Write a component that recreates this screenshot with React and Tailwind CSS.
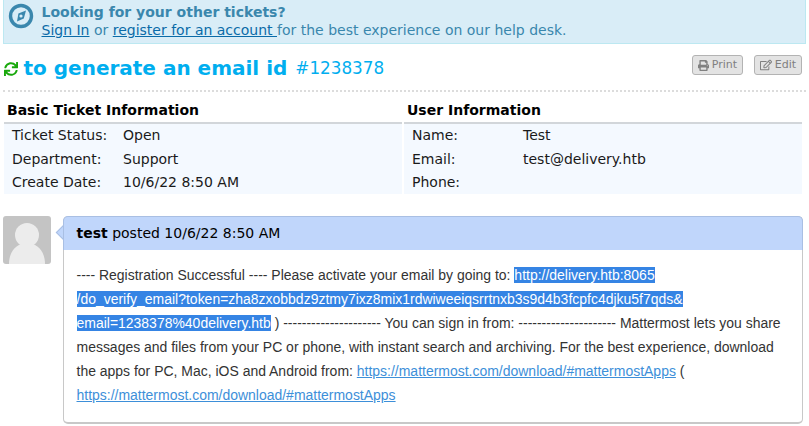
import { FaPrint, FaRegEdit, FaSync } from 'react-icons/fa'

const ticketRows = [
  ['Ticket Status:', 'Open'],
  ['Department:', 'Support'],
  ['Create Date:', '10/6/22 8:50 AM']
]

const userRows = [
  ['Name:', 'Test'],
  ['Email:', 'test@delivery.htb'],
  ['Phone:', '']
]

function InfoTable({ title, rows }) {
  return (
    <div className="w-[398px]">
      <h3 className="h-[30px] pl-[3px] pt-[10px] text-[14px] leading-[17px] font-bold text-black">{title}</h3>
      <div className="h-[72px] border-t-[2px] border-[#d2d6da] bg-[#f4f9ff]">
        {rows.map(([label, value]) => (
          <div key={label} className="flex h-[23.5px] items-center pl-[8px] text-[14px] text-[#1a1a1a]">
            <span className="w-[111px]">{label}</span>
            <span>{value}</span>
          </div>
        ))}
      </div>
    </div>
  )
}

function SupportIcon() {
  return (
    <svg viewBox="0 0 26 26" className="mt-[3px] w-[26px] h-[26px] shrink-0">
      <circle cx="13" cy="13" r="10.5" fill="none" stroke="#3a87ad" strokeWidth="3.4" />
      <path d="M18 7.5 15.8 15.6 9 18.5 10.4 10.6z" fill="#3a87ad" />
      <circle cx="13" cy="13" r="1.6" fill="#d9edf7" />
    </svg>
  )
}

export default function App() {
  return (
    <div className="w-[809px] h-[426px] overflow-hidden bg-white font-['DejaVu_Sans',sans-serif]">
      {/* Banner */}
      <div className="mx-[3px] flex h-[44px] w-[803px] items-start border-x border-b border-[#bce8f1] bg-[#d9edf7] pl-[4px] text-[#3a87ad]">
        <SupportIcon />
        <div className="ml-[7.5px] pt-[3px] text-[14px] leading-[18px]">
          <div className="font-bold">Looking for your other tickets?</div>
          <div>
            <a className="text-[#0a6ba8] underline">Sign In</a> or <a className="text-[#0a6ba8] underline">register for an account </a>for the best experience on our help desk.
          </div>
        </div>
      </div>

      {/* Title */}
      <div className="mx-[3px] flex h-[48px] w-[803px] items-start justify-between border-b-2 border-dotted border-[#dcdcdc]">
        <div className="mt-[11px] flex items-center text-[#00aeef]">
          <FaSync className="mr-[5.5px] ml-[1px] mt-[2px] h-[14px] w-[14px] text-[#19a80c]" />
          <span className="text-[20px] leading-[26px] font-bold">to generate an email id</span>
          <span className="ml-[8px] text-[16.8px] leading-[26px]">#1238378</span>
        </div>
        <div className="mt-[11px] mr-[4px] flex gap-[11px]">
          <button className="flex h-[20px] w-[51px] items-center justify-center gap-[3px] rounded-[3px] border border-[#b3b3b3] bg-[#e3e3e3] text-[11px] text-[#808080]">
            <FaPrint className="h-[11px] w-[11px]" />Print
          </button>
          <button className="flex h-[20px] w-[48px] items-center justify-center gap-[3px] rounded-[3px] border border-[#b3b3b3] bg-[#e3e3e3] text-[11px] text-[#808080]">
            <FaRegEdit className="h-[12px] w-[12px]" />Edit
          </button>
        </div>
      </div>

      {/* Info */}
      <div className="mx-[4px] flex w-[798px] gap-[2px]">
        <InfoTable title="Basic Ticket Information" rows={ticketRows} />
        <InfoTable title="User Information" rows={userRows} />
      </div>

      {/* Thread entry */}
      <div className="mt-[22px] ml-[3px] flex">
        <div className="h-[48px] w-[48px] shrink-0 overflow-hidden rounded-[3px] bg-[#c4c4c4]">
          <svg viewBox="0 0 48 48" className="h-full w-full">
            <circle cx="24" cy="19" r="12" fill="#ececec" />
            <path d="M6 48c0-13 8-21 18-21s18 8 18 21z" fill="#ececec" />
          </svg>
        </div>
        <div className="relative ml-[12px] h-[208px] w-[740px] rounded-[5px] border-r border-b-2 border-l border-[#c8c8c8] bg-white">
          <div className="absolute -left-[6px] top-[11px] h-[11px] w-[11px] rotate-45 border-b border-l border-[#a9bfe3] bg-[#c0d6fb]"></div>
          <div className="relative -mx-px h-[34px] rounded-t-[5px] border-x border-t border-[#a9bfe3] bg-[#c0d6fb] pl-[12.5px] text-[14px] leading-[33px] text-black">
            <b>test</b> posted 10/6/22 8:50 AM
          </div>
          <div className="pt-[13px] pr-[10px] pl-[12.5px] font-['Liberation_Sans',sans-serif] text-[13.97px] leading-[24px] text-[#333333]">
            ---- Registration Successful ---- Please activate your email by going to: <span className="bg-[#3584e4] text-white">http://delivery.htb:8065<br />/do_verify_email?token=zha8zxobbdz9ztmy7ixz8mix1rdwiweeiqsrrtnxb3s9d4b3fcpfc4djku5f7qds&amp;<br />email=1238378%40delivery.htb</span> ) --------------------- You can sign in from: --------------------- Mattermost lets you share messages and files from your PC or phone, with instant search and archiving. For the best experience, download the apps for PC, Mac, iOS and Android from: <a className="text-[#3d8fd9] underline">https://mattermost.com/download/#mattermostApps</a> ( <a className="text-[#3d8fd9] underline">https://mattermost.com/download/#mattermostApps</a>
          </div>
        </div>
      </div>
    </div>
  )
}
